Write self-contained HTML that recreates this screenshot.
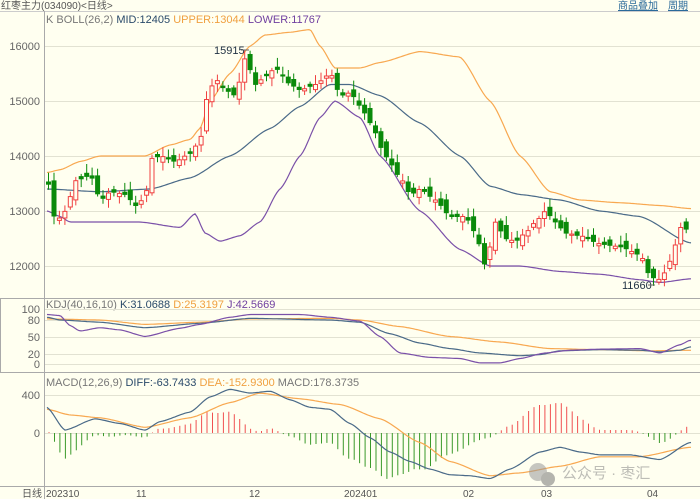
<!DOCTYPE html>
<html><head><meta charset="utf-8"><style>
body{margin:0;width:700px;height:499px;background:#fffff0;overflow:hidden;font-family:"Liberation Sans","Noto Sans CJK SC",sans-serif}
svg{position:absolute;left:0;top:0}
</style></head><body>
<svg id="s" width="700" height="499" xmlns="http://www.w3.org/2000/svg" font-family="Liberation Sans, Noto Sans CJK SC, sans-serif">
<rect width="700" height="499" fill="#fffff0"/>
<text x="1" y="9" font-size="10" fill="#555">红枣主力(034090)&lt;日线&gt;</text>
<text x="618" y="9" font-size="10" fill="#2a6a9a" text-decoration="underline">商品叠加</text>
<text x="668" y="9" font-size="10" fill="#2a6a9a" text-decoration="underline">周期</text>
<line x1="0" y1="11.5" x2="700" y2="11.5" stroke="#ccc"/>
<g font-size="11">
<text x="46" y="23" fill="#777">K  BOLL(26,2) <tspan fill="#2a4a6a">MID:12405</tspan> <tspan fill="#f0a040">UPPER:13044</tspan> <tspan fill="#7040a0">LOWER:11767</tspan></text>
<text x="46" y="308" fill="#777">KDJ(40,16,10) <tspan fill="#2a4a6a">K:31.0688</tspan> <tspan fill="#f0a040">D:25.3197</tspan> <tspan fill="#7040a0">J:42.5669</tspan></text>
<text x="46" y="386" fill="#777">MACD(12,26,9) <tspan fill="#2a4a6a">DIFF:-63.7433</tspan> <tspan fill="#f0a040">DEA:-152.9300</tspan> <tspan fill="#777">MACD:178.3735</tspan></text>
</g>
<g stroke="#e2e2d2" stroke-width="1">
<line x1="45" y1="46.5" x2="700" y2="46.5"/><line x1="45" y1="101.5" x2="700" y2="101.5"/><line x1="45" y1="156.5" x2="700" y2="156.5"/><line x1="45" y1="211.5" x2="700" y2="211.5"/><line x1="45" y1="266.5" x2="700" y2="266.5"/>
<line x1="45" y1="309.5" x2="700" y2="309.5"/><line x1="45" y1="320.5" x2="700" y2="320.5"/><line x1="45" y1="337.5" x2="700" y2="337.5"/><line x1="45" y1="354.5" x2="700" y2="354.5"/><line x1="45" y1="364.5" x2="700" y2="364.5"/>
<line x1="45" y1="395.5" x2="700" y2="395.5"/><line x1="45" y1="433.5" x2="700" y2="433.5"/>
</g>
<g stroke="#aaa" fill="none">
<line x1="44.5" y1="11" x2="44.5" y2="499"/>
<rect x="0.5" y="298.5" width="44" height="74"/>
<line x1="0" y1="298.5" x2="700" y2="298.5"/><line x1="0" y1="372.5" x2="700" y2="372.5"/>
<line x1="0" y1="486.5" x2="700" y2="486.5"/>
</g>
<g font-size="11" fill="#666" text-anchor="end">
<text x="40" y="50">16000</text><text x="40" y="105">15000</text><text x="40" y="160">14000</text><text x="40" y="215">13000</text><text x="40" y="270">12000</text>
<text x="40" y="313">100</text><text x="40" y="324">80</text><text x="40" y="341">50</text><text x="40" y="358">20</text><text x="40" y="368">0</text>
<text x="40" y="399">400</text><text x="40" y="437">0</text>
</g>
<g font-size="10" fill="#555">
<text x="22" y="497">日线</text><text x="46" y="497">202310</text><text x="136" y="497">11</text><text x="249" y="497">12</text><text x="344" y="497">202401</text><text x="463" y="497">02</text><text x="541" y="497">03</text><text x="647" y="497">04</text>
</g>
<g id="d"></g>
<text x="214" y="54" font-size="11" fill="#234">15915</text>
<line x1="241" y1="50" x2="249" y2="50" stroke="#666"/>
<text x="622" y="289" font-size="11" fill="#234">11660</text>
<line x1="648" y1="285" x2="655" y2="285" stroke="#666"/>
<g opacity="0.55"><circle cx="538" cy="472" r="9" fill="#999"/><circle cx="548" cy="479" r="7" fill="#777"/>
<text x="562" y="478" font-size="15" fill="#888">公众号 · 枣汇</text></g>
</svg>
<script>
function ip(p,x){if(x<=p[0])return p[1];for(var i=2;i<p.length;i+=2){if(x<=p[i]){var t=(x-p[i-2])/(p[i]-p[i-2]);t=t*t*(3-2*t)*0.5+t*0.5;return p[i-1]+t*(p[i+1]-p[i-1]);}}return p[p.length-1];}
var py=function(v){return 46+(16000-v)*0.055},ky=function(v){return 364-v*0.55},my=function(v){return 433-v*0.095};
var C=[47,13550,55,12800,65,13000,75,13550,90,13650,100,13200,110,13350,125,13300,135,13100,145,13250,150,13950,160,14000,175,13900,190,14050,200,14300,205,15000,215,15400,225,15200,235,15100,245,15800,255,15300,265,15450,275,15600,290,15300,300,15200,315,15300,330,15500,340,15100,350,15150,360,14900,370,14600,385,14000,400,13600,410,13300,420,13400,435,13200,450,12900,465,12900,475,12600,485,12000,495,12800,505,12500,515,12450,525,12600,535,12800,545,13000,555,12800,565,12600,580,12550,600,12400,620,12350,640,12200,650,11800,660,11750,670,12100,680,12700,690,12650];
var MID=[47,13400,100,13350,150,13400,190,13600,230,14000,270,14500,300,14900,330,15300,350,15300,380,15100,420,14600,460,14000,490,13450,520,13300,560,13200,600,13000,640,12900,690,12420];
var UP=[47,13700,60,13750,80,13900,100,14000,145,14000,170,14200,190,14300,200,14500,210,15000,230,15500,250,16000,265,16200,290,16250,310,16300,320,16000,335,15600,360,15600,380,15700,420,15900,460,15800,490,15000,520,14000,550,13350,580,13200,620,13150,660,13100,690,13044];
var LO=[47,13000,60,12900,70,12800,100,12800,140,12800,180,12700,195,12950,205,12600,220,12450,240,12550,260,12800,280,13400,300,14000,320,14700,335,15000,360,14700,380,14000,420,13000,460,12300,490,12000,520,12000,560,11900,600,11850,640,11750,660,11700,690,11767];
var D=[47,82,100,80,145,72,200,76,250,82,330,83,360,80,400,68,450,50,500,40,550,28,600,26,650,24,690,25];
var K=[47,85,60,80,100,76,145,66,200,74,250,83,330,80,360,76,390,55,420,38,450,28,480,20,520,15,540,17,560,24,600,26,640,25,660,22,680,25,690,31];
var J=[47,90,60,88,70,70,80,60,100,66,120,62,145,50,180,65,200,72,230,85,250,90,300,90,330,85,360,78,380,50,400,20,430,12,460,10,480,2,500,2,520,10,545,20,570,25,600,27,640,28,660,20,680,35,690,43];
var DI=[47,270,65,30,95,150,120,100,145,30,160,120,190,220,210,380,230,460,250,420,270,440,290,350,310,270,330,250,350,100,370,-50,390,-200,410,-300,430,-380,450,-440,470,-450,490,-480,510,-380,540,-200,560,-150,580,-200,600,-230,630,-230,660,-280,690,-100];
var DE=[47,250,70,190,100,160,145,60,190,160,230,320,260,420,300,360,340,300,380,150,420,-100,450,-300,490,-450,520,-420,560,-350,600,-250,640,-250,690,-150];
var h='';
function line(p,f,c){var s='';for(var x=47;x<=692;x+=2)s+=x+','+f(ip(p,x)).toFixed(1)+' ';h+='<polyline points="'+s+'" fill="none" stroke="'+c+'" stroke-width="1.2"/>';}
for(var x=49;x<=690;x+=5.45){var v=1.6*(ip(DI,x)-ip(DE,x));var y=my(v);h+='<line x1="'+x.toFixed(1)+'" x2="'+x.toFixed(1)+'" y1="433" y2="'+y.toFixed(1)+'" stroke="'+(v>0?'#f05050':'#3a9a2a')+'"/>';}
line(UP,py,'#f8a850');line(MID,py,'#4a6a88');line(LO,py,'#7a50a8');
line(D,ky,'#f8a850');line(K,ky,'#4a6a88');line(J,ky,'#7a50a8');
line(DE,my,'#f8a850');line(DI,my,'#4a6a88');
var prev=13500,i=0;
for(var x=48;x<=690;x+=5.45){i++;var c=ip(C,x);var n=((i*37)%11-5)*20;var o=prev+n;if(Math.abs(o-c)<20)o=c+(i%2?40:-40);
var hi=Math.max(o,c)+50+(i*13%7)*20,lo=Math.min(o,c)-50-(i*17%5)*25;if(x>245&&x<251)hi=15915;if(x>653&&x<659)lo=11660;
var up=c>o,col=up?'#f04040':'#0a8a0a';var yt=py(Math.max(o,c)),yb=py(Math.min(o,c));if(yb-yt<1)yb=yt+1;
h+='<line x1="'+(x+0.5).toFixed(1)+'" x2="'+(x+0.5).toFixed(1)+'" y1="'+py(hi).toFixed(1)+'" y2="'+py(lo).toFixed(1)+'" stroke="'+col+'"/>';
h+='<rect x="'+(x-1.5).toFixed(1)+'" y="'+yt.toFixed(1)+'" width="4" height="'+(yb-yt).toFixed(1)+'" fill="'+(up?'#fffff0':col)+'" stroke="'+col+'"/>';prev=c;}
document.getElementById('d').innerHTML=h;
</script>
</body></html>
